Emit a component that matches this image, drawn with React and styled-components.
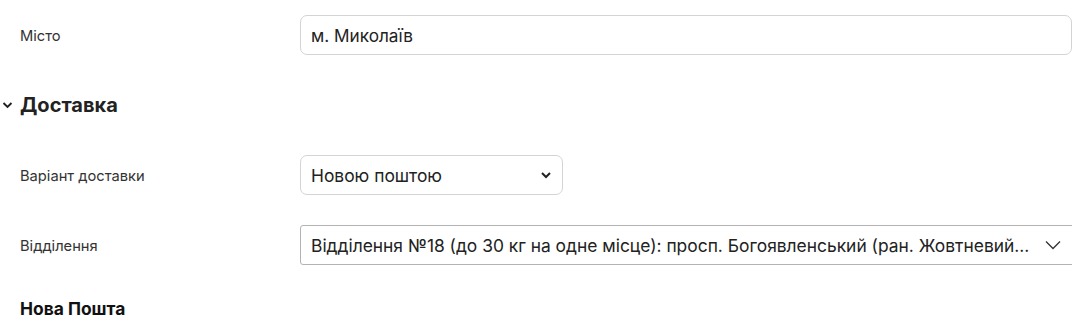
import React from 'react'
import styled, { createGlobalStyle } from 'styled-components'

const GlobalStyle = createGlobalStyle`
  body {
    margin: 0;
    background: #fff;
    font-family: Inter, "Noto Sans", sans-serif;
    color: #222;
    overflow: hidden;
  }
`

const Page = styled.div`
  width: 1072px;
  overflow: hidden;
  padding-top: 15px;
`

const Row = styled.div`
  display: grid;
  grid-template-columns: 300px 1fr;
  align-items: center;
  margin-bottom: ${({ gap }) => gap || 0}px;
`

const Label = styled.div`
  padding-left: 20px;
  padding-top: 1px;
  font-size: 14.7px;
  color: #333;
`

const TextInput = styled.div`
  box-sizing: border-box;
  height: 40px;
  width: 772px;
  border: 1px solid #d4d4d4;
  border-radius: 7px;
  padding: 0 10px;
  display: flex;
  align-items: center;
  font-size: 17.2px;
  color: #222;
`

const SectionTitle = styled.div`
  display: flex;
  align-items: center;
  gap: 7px;
  padding-left: 2px;
  font-size: 20px;
  font-weight: 700;
  color: #222;
  height: 32px;
  margin-bottom: 34px;
`

const SelectBox = styled.div`
  box-sizing: border-box;
  height: 40px;
  width: ${({ w }) => w}px;
  border: 1px solid ${({ plain }) => (plain ? '#b3b3b3' : '#d4d4d4')};
  border-radius: ${({ plain }) => (plain ? '3px' : '7px')};
  padding: 0 10px;
  display: flex;
  align-items: center;
  justify-content: space-between;
  font-size: 17.4px;
  color: #222;
  white-space: nowrap;
`

const Arrow = styled.span`
  display: flex;
  align-items: center;
  margin-right: ${({ mr }) => mr || 0}px;
`

const Carrier = styled.div`
  padding-left: 20px;
  font-size: 17.4px;
  font-weight: 700;
  color: #111;
  margin-top: 33px;
`

const App = () => (
  <>
    <GlobalStyle />
    <Page>
      <Row gap={34}>
        <Label>Місто</Label>
        <TextInput>м. Миколаїв</TextInput>
      </Row>

      <SectionTitle>
        <svg width="11" height="8" viewBox="0 0 11 8">
          <path d="M1.5 2 L5.5 6 L9.5 2" fill="none" stroke="#222" strokeWidth="1.9" />
        </svg>
        Доставка
      </SectionTitle>

      <Row gap={30}>
        <Label>Варіант доставки</Label>
        <SelectBox w={263}>
          Новою поштою
          <Arrow>
            <svg width="12" height="8" viewBox="0 0 12 8">
              <path d="M2 2 L6 6 L10 2" fill="none" stroke="#222" strokeWidth="2" />
            </svg>
          </Arrow>
        </SelectBox>
      </Row>

      <Row>
        <Label>Відділення</Label>
        <SelectBox w={800} plain>
          Відділення №18 (до 30 кг на одне місце): просп. Богоявленський (ран. Жовтневий...
          <Arrow mr={28}>
            <svg width="16" height="10" viewBox="0 0 16 10">
              <path d="M1 1.5 L8 8.5 L15 1.5" fill="none" stroke="#333" strokeWidth="1.3" />
            </svg>
          </Arrow>
        </SelectBox>
      </Row>

      <Carrier>Нова Пошта</Carrier>
    </Page>
  </>
)

export default App
